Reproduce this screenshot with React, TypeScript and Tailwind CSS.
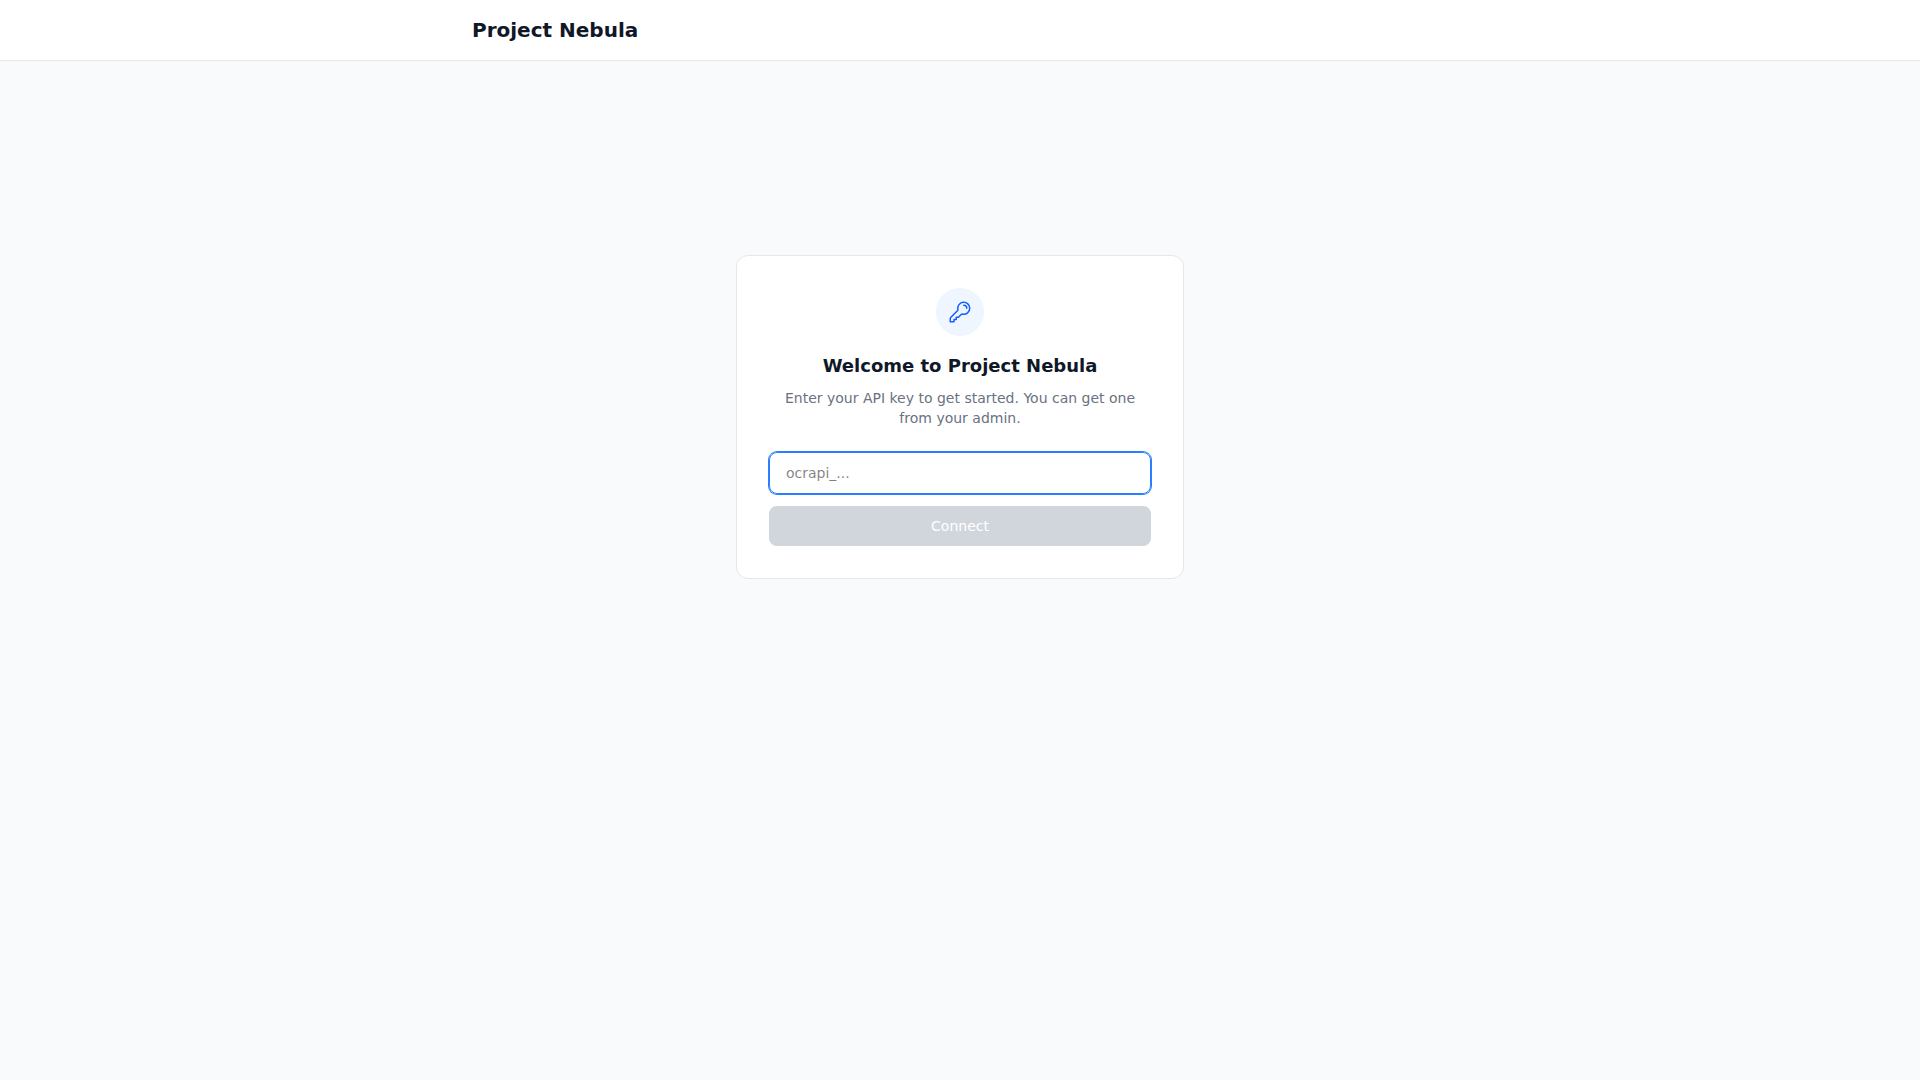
import React, { useEffect, useRef, useState } from "react";

const App: React.FC = () => {
  const [apiKey, setApiKey] = useState("");
  const inputRef = useRef<HTMLInputElement>(null);

  useEffect(() => {
    inputRef.current?.focus();
  }, []);

  return (
    <div className="min-h-screen bg-gray-50 font-['DejaVu_Sans',sans-serif]">
      <header className="bg-white border-b border-gray-200">
        <div className="max-w-5xl mx-auto px-6 py-4">
          <h1 className="text-xl leading-7 font-bold text-gray-900">Project Nebula</h1>
        </div>
      </header>
      <main className="max-w-5xl mx-auto px-6 pt-[194px] flex justify-center">
        <div className="w-full max-w-md bg-white rounded-xl border border-gray-200 p-8 text-center">
          <div className="w-12 h-12 mx-auto mb-4 rounded-full bg-blue-50 flex items-center justify-center">
            <svg
              xmlns="http://www.w3.org/2000/svg"
              fill="none"
              viewBox="0 0 24 24"
              strokeWidth={1.5}
              stroke="currentColor"
              className="w-6 h-6 text-blue-600"
            >
              <path
                strokeLinecap="round"
                strokeLinejoin="round"
                d="M15.75 5.25a3 3 0 0 1 3 3m3 0a6 6 0 0 1-7.029 5.912c-.563-.097-1.159.026-1.563.43L10.5 17.25H8.25v2.25H6v2.25H2.25v-2.818c0-.597.237-1.17.659-1.591l6.499-6.499c.404-.404.527-1 .43-1.563A6 6 0 1 1 21.75 8.25Z"
              />
            </svg>
          </div>
          <h2 className="text-lg font-semibold text-gray-900 mb-2">Welcome to Project Nebula</h2>
          <p className="text-sm text-gray-500 mb-6 leading-5">
            Enter your API key to get started. You can get one from your admin.
          </p>
          <form className="flex flex-col gap-3" onSubmit={(e) => e.preventDefault()}>
            <input
              ref={inputRef}
              type="text"
              placeholder="ocrapi_..."
              value={apiKey}
              onChange={(e) => setApiKey(e.target.value)}
              className="w-full px-4 py-2.5 text-sm leading-5 border border-gray-300 rounded-lg focus:outline-none focus:ring-1 focus:ring-blue-500 focus:border-blue-500"
            />
            <button
              type="submit"
              disabled={!apiKey}
              className="w-full py-2.5 text-sm leading-5 font-medium text-white bg-blue-600 rounded-lg disabled:bg-gray-300"
            >
              Connect
            </button>
          </form>
        </div>
      </main>
    </div>
  );
};

export default App;
